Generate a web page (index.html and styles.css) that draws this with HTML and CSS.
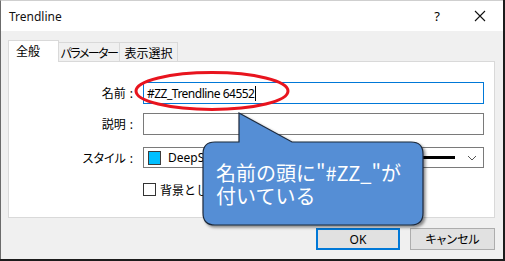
FILE: index.html
```html
<!DOCTYPE html>
<html lang="ja">
<head>
    <meta charset="UTF-8">
    <meta name="viewport" content="width=device-width, initial-scale=1.0">
    <title>Trendline</title>
    <link rel="stylesheet" href="styles.css">
</head>
<body>
    <div class="window">
        <div class="titlebar">
            <span class="title">Trendline</span>
            <span class="tb-btn help">?</span>
            <span class="tb-btn close">
                <svg width="12" height="12" viewBox="0 0 12 12"><path d="M1 1 L11 11 M11 1 L1 11" stroke="#111" stroke-width="1.1" fill="none"/></svg>
            </span>
        </div>

        <div class="client">
            <div class="tabs">
                <div class="tab active">全般</div>
                <div class="tab tab-narrow">パラメーター</div>
                <div class="tab">表示選択</div>
            </div>

            <div class="panel">
                <div class="row row-name">
                    <label class="label">名前<span class="colon">:</span></label>
                    <div class="field focus"><span class="value">#ZZ_Trendline 64552</span><span class="caret"></span></div>
                </div>
                <div class="row row-desc">
                    <label class="label">説明<span class="colon">:</span></label>
                    <div class="field"></div>
                </div>
                <div class="row row-style">
                    <label class="label">スタイル<span class="colon">:</span></label>
                    <div class="field combo">
                        <span class="swatch"></span>
                        <span class="combo-text">DeepSkyBlue</span>
                        <span class="line-sample"></span>
                        <svg class="chevron" width="10" height="6" viewBox="0 0 10 6"><path d="M1 1 L5 5 L9 1" stroke="#555" stroke-width="1" fill="none"/></svg>
                    </div>
                </div>
                <div class="row row-check">
                    <span class="label"></span>
                    <label class="check"><span class="box"></span>背景として描画</label>
                </div>
            </div>

            <div class="buttons">
                <button class="btn default">OK</button>
                <button class="btn">キャンセル</button>
            </div>
        </div>

        <!-- 注釈 -->
        <svg class="mark" width="162" height="44" viewBox="0 0 162 44">
            <ellipse cx="79" cy="21" rx="76" ry="18.5" fill="none" stroke="#e8141e" stroke-width="3"/>
        </svg>

        <div class="callout">
            <svg class="callout-shape" width="232" height="124" viewBox="0 0 232 124">
                <defs>
                    <filter id="shadow" x="-10%" y="-10%" width="130%" height="130%">
                        <feDropShadow dx="2" dy="2" stdDeviation="1.5" flood-color="#000" flood-opacity="0.45"/>
                    </filter>
                </defs>
                <path d="M15 32 L39 32 L39 3 L92 32 L211 32 Q223 32 223 44 L223 103 Q223 115 211 115 L15 115 Q3 115 3 103 L3 44 Q3 32 15 32 Z"
                      fill="#558ed5" stroke="#1d2a3d" stroke-width="1.2" filter="url(#shadow)"/>
            </svg>
            <p class="callout-text">名前の頭に"#ZZ_"が<br>付いている</p>
        </div>
    </div>
</body>
</html>
```

FILE: styles.css
```css
* {
    box-sizing: border-box;
    margin: 0;
    padding: 0;
}

body {
    background: #1c1c1c;
    font-family: 'Noto Sans', 'Noto Sans CJK JP', sans-serif;
    font-size: 12px;
    color: #000;
    width: 505px;
    height: 261px;
    overflow: hidden;
}

.window {
    position: relative;
    width: 503px;
    height: 259px;
    background: #f0f0f0;
    border-left: 1px solid #6b6b6b;
    border-top: 1px solid #cfcfcf;
}

/* タイトルバー */
.titlebar {
    height: 30px;
    background: #fff;
    display: flex;
    align-items: center;
    padding-left: 8px;
}

.title {
    flex: 1;
    font-size: 12px;
    color: #111;
}

.tb-btn {
    width: 45px;
    display: flex;
    justify-content: center;
    align-items: center;
}

.help {
    font-size: 13px;
    padding-left: 5px;
}

.close {
    width: 46px;
}

/* タブ */
.client {
    padding: 9px 8px 0 7px;
}

.tabs {
    display: flex;
    align-items: flex-end;
    height: 21px;
    font-family: 'Noto Sans CJK JP', sans-serif;
    font-feature-settings: "palt";
}

.tab {
    height: 19px;
    border: 1px solid #d9d9d9;
    border-bottom: none;
    background: #f0f0f0;
    display: flex;
    align-items: center;
    justify-content: center;
    font-size: 12px;
    white-space: nowrap;
}

.tab:nth-child(2) {
    width: 61px;
    border-left: none;
}

.tab:nth-child(3) {
    width: 58px;
    border-left: none;
}

.tab-narrow {
    letter-spacing: -1.5px;
}

.tab.active {
    width: 51px;
    height: 22px;
    margin-bottom: -1px;
    background: #fff;
    position: relative;
    z-index: 1;
    padding: 0 0 2px 7px;
    justify-content: flex-start;
}

.panel {
    height: 157px;
    background: #fff;
    border: 1px solid #d9d9d9;
    padding-top: 20px;
}

/* フォーム */
.row {
    display: flex;
    align-items: center;
}

.row-desc {
    margin-top: 9px;
}

.row-style {
    margin-top: 12px;
}

.row-check {
    margin-top: 13px;
}

.label {
    width: 126px;
    margin-right: 8px;
    text-align: right;
    font-family: 'Noto Sans CJK JP', sans-serif;
    font-feature-settings: "palt";
    font-size: 12px;
}

.colon {
    font-family: 'Noto Sans', sans-serif;
    margin: 0 2px 0 4px;
}

.field {
    width: 341px;
    height: 22px;
    border: 1px solid #7a7a7a;
    background: #fff;
    display: flex;
    align-items: center;
    padding-left: 3px;
}

.field.focus {
    border-color: #0078d7;
}

.value {
    font-size: 12px;
    letter-spacing: -0.5px;
}

.caret {
    width: 1px;
    height: 15px;
    background: #000;
    margin-left: 1px;
}

.combo {
    height: 21px;
    padding-left: 4px;
    position: relative;
}

.swatch {
    width: 13px;
    height: 14px;
    background: #00bfff;
    border: 1px solid #3c3c3c;
}

.combo-text {
    margin-left: 7px;
    flex: 1;
}

.line-sample {
    width: 60px;
    height: 3px;
    background: #000;
    margin-right: 12px;
}

.chevron {
    margin-right: 6px;
}

.check {
    display: flex;
    align-items: center;
    font-family: 'Noto Sans CJK JP', sans-serif;
    font-size: 12px;
}

.box {
    width: 13px;
    height: 13px;
    border: 1px solid #333;
    background: #fff;
    margin-right: 4px;
}

/* ボタン */
.buttons {
    display: flex;
    justify-content: flex-end;
    gap: 10px;
    margin-top: 10px;
}

.btn {
    width: 85px;
    height: 22px;
    background: #e1e1e1;
    border: 1px solid #adadad;
    font-family: 'Noto Sans', 'Noto Sans CJK JP', sans-serif;
    font-feature-settings: "palt";
    font-size: 12px;
    color: #000;
}

.btn.default {
    width: 84px;
    border: 2px solid #0078d7;
}

/* 注釈 */
.mark {
    position: absolute;
    left: 132px;
    top: 69px;
    z-index: 2;
}

.callout {
    position: absolute;
    left: 199px;
    top: 109px;
    width: 232px;
    height: 124px;
    z-index: 3;
}

.callout-shape {
    display: block;
}

.callout-text {
    position: absolute;
    left: 16px;
    top: 51px;
    color: #fff;
    font-family: 'Noto Sans CJK JP', sans-serif;
    font-size: 20px;
    line-height: 23px;
    white-space: nowrap;
}
```
